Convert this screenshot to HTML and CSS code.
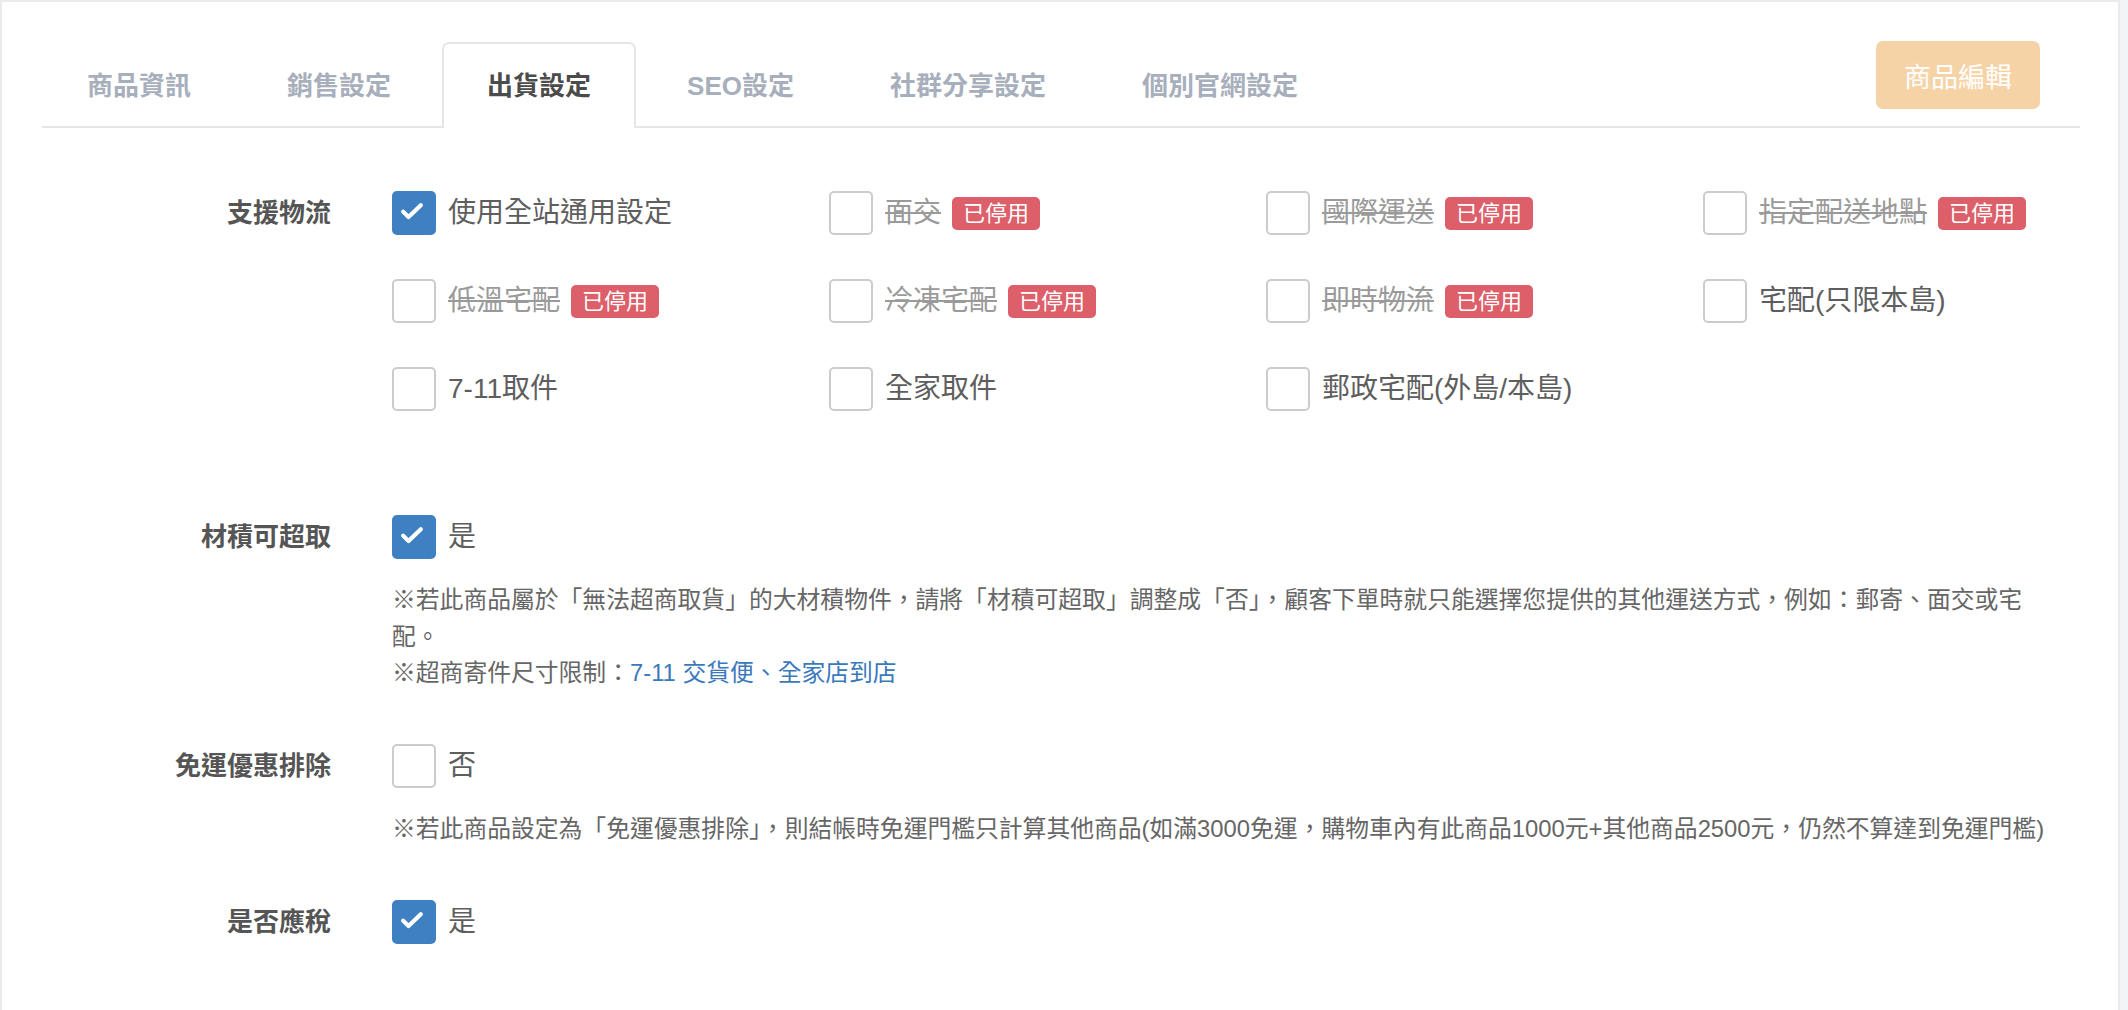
FILE: index.html
```html
<html>
<head>
<meta http-equiv="Content-Type" content="text/html; charset=utf-8">
<link rel="stylesheet" href="styles.css">
</head>
<body>
<div class="card">
  <div class="tabbar">
    <a class="tab">商品資訊</a>
    <a class="tab">銷售設定</a>
    <a class="tab active">出貨設定</a>
    <a class="tab">SEO設定</a>
    <a class="tab">社群分享設定</a>
    <a class="tab">個別官網設定</a>
    <button class="btnedit">商品編輯</button>
  </div>

  <div class="form">
    <div class="row first">
      <div class="label">支援物流</div>
      <div class="field">
        <div class="grid">
          <label class="chk"><span class="box on"><svg viewBox="0 0 44 44"><polyline points="12,22.5 18,28.5 31.5,15.5"/></svg></span><span class="txt">使用全站通用設定</span></label>
          <label class="chk"><span class="box"></span><span class="txt off">面交</span><span class="badge">已停用</span></label>
          <label class="chk"><span class="box"></span><span class="txt off">國際運送</span><span class="badge">已停用</span></label>
          <label class="chk"><span class="box"></span><span class="txt off">指定配送地點</span><span class="badge">已停用</span></label>
          <label class="chk"><span class="box"></span><span class="txt off">低溫宅配</span><span class="badge">已停用</span></label>
          <label class="chk"><span class="box"></span><span class="txt off">冷凍宅配</span><span class="badge">已停用</span></label>
          <label class="chk"><span class="box"></span><span class="txt off">即時物流</span><span class="badge">已停用</span></label>
          <label class="chk"><span class="box"></span><span class="txt">宅配(只限本島)</span></label>
          <label class="chk"><span class="box"></span><span class="txt">7-11取件</span></label>
          <label class="chk"><span class="box"></span><span class="txt">全家取件</span></label>
          <label class="chk"><span class="box"></span><span class="txt">郵政宅配(外島/本島)</span></label>
        </div>
      </div>
    </div>

    <div class="row">
      <div class="label">材積可超取</div>
      <div class="field">
        <label class="chk"><span class="box on"><svg viewBox="0 0 44 44"><polyline points="12,22.5 18,28.5 31.5,15.5"/></svg></span><span class="txt">是</span></label>
        <div class="note">
          ※若此商品屬於「無法超商取貨」的大材積物件，請將「材積可超取」調整成「否」，顧客下單時就只能選擇您提供的其他運送方式，例如：郵寄、面交或宅配。<br>
          ※超商寄件尺寸限制：<span class="links"><a>7-11 交貨便</a>、<a>全家店到店</a></span>
        </div>
      </div>
    </div>

    <div class="row">
      <div class="label">免運優惠排除</div>
      <div class="field">
        <label class="chk"><span class="box"></span><span class="txt">否</span></label>
        <div class="note">※若此商品設定為「免運優惠排除」，則結帳時免運門檻只計算其他商品(如滿3000免運，購物車內有此商品1000元+其他商品2500元，仍然不算達到免運門檻)</div>
      </div>
    </div>

    <div class="row">
      <div class="label">是否應稅</div>
      <div class="field">
        <label class="chk"><span class="box on"><svg viewBox="0 0 44 44"><polyline points="12,22.5 18,28.5 31.5,15.5"/></svg></span><span class="txt">是</span></label>
      </div>
    </div>
  </div>
</div>
</body>
</html>
```

FILE: styles.css
```css
html, body
{
margin: 0;
background: #f3f4f8;
font-family: "Liberation Sans", "Noto Sans CJK TC", sans-serif;
}
.card
{
background: #ffffff;
border: 2px solid #ebebee;
border-bottom: none;
margin-right: 8px;
min-height: 1020px;
box-sizing: border-box;
}
/* tabs */
.tabbar
{
display: flex;
align-items: flex-start;
margin: 40px 38px 0 40px;
border-bottom: 2px solid #e6e6e6;
}
.tab
{
display: block;
font-size: 26px;
font-weight: 700;
color: #a8afbc;
line-height: 84px;
height: 84px;
padding: 0 43px;
margin-right: 6px;
margin-bottom: -2px;
border: 2px solid transparent;
border-bottom: none;
border-radius: 7px 7px 0 0;
cursor: pointer;
}
.tab.active
{
color: #4b4b4b;
background: #ffffff;
border-color: #e6e6e6;
}
.btnedit
{
margin: -1px 40px 0 auto;
height: 68px;
padding: 0 28px;
font-family: inherit;
font-size: 27px;
color: #ffffff;
background: #f6d3a7;
border: none;
border-radius: 7px;
}
/* form */
.form
{
margin-top: 63px;
}
.row
{
display: grid;
grid-template-columns: 329px 1655px;
column-gap: 61px;
margin-bottom: 52.5px;
}
.row.first
{
margin-bottom: 104px;
}
.label
{
text-align: right;
font-size: 26px;
font-weight: 700;
color: #555555;
line-height: 44px;
}
.grid
{
display: grid;
grid-template-columns: 437px 437px 437px 1fr;
row-gap: 44px;
}
.chk
{
display: flex;
align-items: center;
height: 44px;
cursor: pointer;
}
.box
{
width: 44px;
height: 44px;
box-sizing: border-box;
border: 2px solid #cccccc;
border-radius: 5px;
background: #ffffff;
margin-right: 12px;
flex-shrink: 0;
}
.box.on
{
background: #3f80c2;
border-color: #3f80c2;
}
.box svg
{
display: block;
width: 40px;
height: 40px;
margin: 0;
}
.box svg polyline
{
fill: none;
stroke: #ffffff;
stroke-width: 4.6;
stroke-linecap: round;
stroke-linejoin: round;
transform: translate(-2px, -2px);
}
.txt
{
font-size: 28px;
color: #5e5e5e;
line-height: 44px;
white-space: nowrap;
}
.txt.off
{
color: #9a9a9a;
text-decoration: line-through;
}
.badge
{
margin-left: 11px;
height: 33px;
line-height: 33px;
padding: 0 11px;
font-size: 22px;
color: #ffffff;
background: #dc5f6a;
border-radius: 5px;
}
.note
{
margin-top: 23px;
font-size: 23.8px;
line-height: 36.5px;
color: #666666;
}
.links, .links a
{
color: #3a79bb;
text-decoration: none;
}
```
